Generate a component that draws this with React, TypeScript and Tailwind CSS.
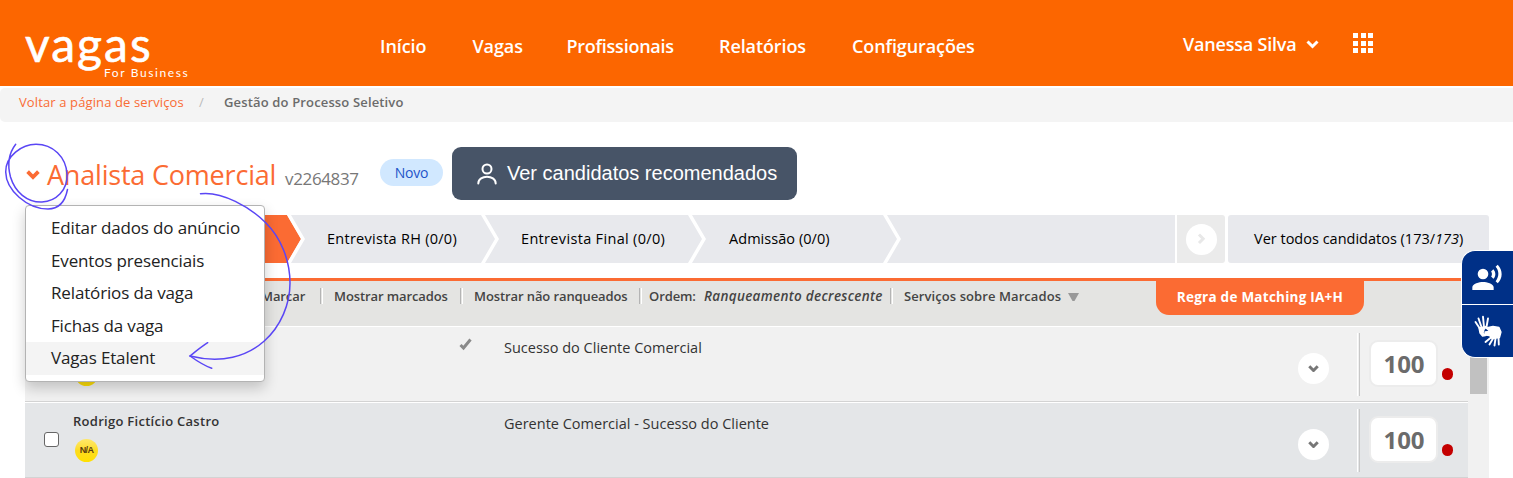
import { MdRecordVoiceOver } from "react-icons/md";
import type { ReactNode } from "react";

const menuItems = [
  "Editar dados do anúncio",
  "Eventos presenciais",
  "Relatórios da vaga",
  "Fichas da vaga",
  "Vagas Etalent",
];

const navItems = [
  { label: "Início", cls: "w-[92.5px]" },
  { label: "Vagas", cls: "w-[94px]" },
  { label: "Profissionais", cls: "w-[152.5px] tracking-[-0.25px]" },
  { label: "Relatórios", cls: "w-[133px]" },
  { label: "Configurações", cls: "w-[130px]" },
];

const rows = [
  { id: 1, name: "", job: "Sucesso do Cliente Comercial", checked: true, bg: "bg-[#f1f1f1]" },
  { id: 2, name: "Rodrigo Fictício Castro", job: "Gerente Comercial - Sucesso do Cliente", checked: false, bg: "bg-[#e4e6e8]" },
];

function Chevron({ className, size = 13, width = 3 }: { className?: string; size?: number; width?: number }) {
  return (
    <svg className={className} width={size} height={(size * 9) / 13} viewBox="0 0 13 9" fill="none">
      <path d="M1.5 1.5 6.5 6.5 11.5 1.5" stroke="currentColor" strokeWidth={width} />
    </svg>
  );
}

function Stage({ className, children }: { className: string; children?: ReactNode }) {
  return (
    <div className={`relative flex h-12 shrink-0 items-center bg-[#e8e9ed] text-[14.5px] text-black ${className}`}>
      {children}
    </div>
  );
}

function StageArrow() {
  return (
    <svg className="absolute top-0 -right-[18px] z-10" width="18" height="48" viewBox="0 0 18 48">
      <path d="M0 0 L14 24 L0 48 H4 L18 24 L4 0Z" fill="#fff" />
    </svg>
  );
}

function Divider() {
  return <span className="mt-[7px] h-4 w-[3px] shrink-0 border-r border-l border-r-white border-l-[#b4b4b4]" />;
}

function Header() {
  return (
    <header className="flex h-[86px] bg-[#fc6600] text-white">
      <div className="w-[380px] shrink-0 pt-[33px] pl-[25px] font-[Lato] whitespace-nowrap">
        <div className="h-[31px] text-[48px] leading-[21px] tracking-[2px] [-webkit-text-stroke:0.6px_white]">vagas</div>
        <div className="pl-[79px] text-[12px] leading-[17px] tracking-[1.6px]">For Business</div>
      </div>
      <nav className="flex w-[803px] shrink-0 pt-[33px] text-[18px] leading-[26px] font-semibold tracking-[-0.1px]">
        {navItems.map((n) => (
          <a key={n.label} className={`shrink-0 whitespace-nowrap ${n.cls}`}>
            {n.label}
          </a>
        ))}
      </nav>
      <div className="w-[123px] pt-[31px] text-[18px] leading-[26px] font-semibold tracking-[-0.2px] whitespace-nowrap">
        Vanessa Silva
      </div>
      <Chevron className="mt-10" />
      <div className="mt-[33px] ml-[34px] grid h-5 grid-cols-3 gap-[2.5px]">
        {Array.from({ length: 9 }, (_, i) => (
          <span key={i} className="size-[5px] bg-white" />
        ))}
      </div>
    </header>
  );
}

function ActionsMenu() {
  return (
    <div className="absolute top-[205px] left-[25px] z-20 h-[177px] w-60 rounded-[4px] border border-[#b3b3b3] bg-white pt-[6px] shadow-[0_6px_14px_rgba(0,0,0,0.2)]">
      {menuItems.map((item, i) => (
        <div
          key={item}
          className={`h-[32.5px] pl-[25px] text-[17px] leading-[31px] tracking-[-0.15px] text-[#222] ${i === menuItems.length - 1 ? "bg-[#f4f4f4]" : ""}`}
        >
          {item}
        </div>
      ))}
    </div>
  );
}

function Annotations() {
  return (
    <svg className="pointer-events-none absolute top-0 left-0 z-30" width="320" height="400" fill="none" stroke="#5a46f5" strokeWidth="1.5" strokeLinecap="round">
      <path d="M15.7 144.3C9 153 7 164 10.5 177C15 192 27 202.5 42 202C56 201.5 68 190 67 174C66 157 53 144.3 36 144.3C22 144.3 5.5 156 5.7 172C6 190 27 209 48 209C59 209 65 202 67.5 189.5" />
      <path d="M200.5 193.7C222 191 250 207 266 223C280 237 290 259 290 283C290 325 254 372 190 356" />
      <path d="M207.7 342.7C201 347 195 352 190 356C197 361 204 365.5 211.7 368.3" />
    </svg>
  );
}

function AccessibilityBar() {
  return (
    <div className="absolute top-[250px] right-0 z-20 w-[52px] overflow-hidden rounded-l-[14px] border-y border-l border-white bg-[#003087] text-white">
      <div className="h-[54px] border-b border-white pt-[11px] pl-[9px]">
        <MdRecordVoiceOver size={32} />
      </div>
      <div className="h-[52px] pt-[10px] pl-[12px]">
        <svg width="30" height="32" viewBox="0 0 30 32" fill="none" stroke="#fff" strokeLinecap="round" strokeLinejoin="round">
          <path d="M5.5 13 1.5 7M7.5 12 4.5 3.5M10 12 9 1.8M12.5 12 14 3.5" strokeWidth="1.9" />
          <path d="M5 13 12.5 11.5 10 14.5 9 18 11.5 20.5 8.5 21 6 18Z" fill="#fff" strokeWidth="1.3" />
          <path d="M17 22.5 11.5 27M19 23.5 15.5 29.5M21.5 23.5 20.5 30.5M24.5 22 24.8 29.5" strokeWidth="1.9" />
          <path d="M11 17 16 16.500 12 13 19 11.5 25 12.5 27 17 25.5 22.5 18 23.5 15.500 20.500 11 20Z" fill="#fff" strokeWidth="1.3" />
        </svg>
      </div>
    </div>
  );
}

export default function App() {
  return (
    <div className="relative h-[478px] w-[1513px] overflow-hidden bg-white font-['Open_Sans',sans-serif]">
      <Header />

      <div className="mt-[2px] flex h-[34px] rounded-l-[5px] bg-[#f4f4f4] pl-[19px] text-[13px] leading-[29px] whitespace-nowrap">
        <span className="w-[180px] tracking-[0.12px] text-[#f96c35]">Voltar a página de serviços</span>
        <span className="w-[25px] text-[#bbb]">/</span>
        <span className="font-semibold tracking-[0.15px] text-[#6b6b6b]">Gestão do Processo Seletivo</span>
      </div>

      <div className="flex h-[93px] pl-[26px] whitespace-nowrap">
        <Chevron className="mt-[48px] text-[#fb6b33]" size={14} width={3.5} />
        <h1 className="ml-[7px] w-[238px] pt-[34px] text-[27px] leading-[38px] tracking-[-0.2px] text-[#fb6b33]">
          Analista Comercial
        </h1>
        <span className="w-[95px] pt-[46px] text-[17px] leading-[22px] tracking-[-0.35px] text-[#777]">v2264837</span>
        <span className="mt-[37px] h-[27px] w-[63px] rounded-full bg-[#d1e8ff] text-center text-[14px] leading-[27px] tracking-[-0.2px] text-[#1d55c9]">
          Novo
        </span>
        <button className="mt-[25px] ml-[9px] flex h-[53px] w-[345px] items-center rounded-[9px] bg-[#475467] pl-[25px] font-['Liberation_Sans'] text-[20px] text-white">
          <svg width="20" height="22" viewBox="0 0 20 22" fill="none" stroke="#fff" strokeWidth="2" strokeLinecap="round">
            <circle cx="10" cy="6" r="4.5" />
            <path d="M1.3 20.5C1.5 11.5 18.5 11.5 18.7 20.5" />
          </svg>
          <span className="-mt-[2px] ml-[10px]">Ver candidatos recomendados</span>
        </button>
      </div>

      <div className="flex pl-[25px] whitespace-nowrap">
        <Stage className="w-[262px] bg-[#fb6b33]!">
          <svg className="absolute top-0 -right-[18px] z-10" width="18" height="48" viewBox="0 0 18 48">
            <path d="M0 0 14 24 0 48Z" fill="#fb6b33" />
            <path d="M0 0 L14 24 L0 48 H4 L18 24 L4 0Z" fill="#fff" />
          </svg>
        </Stage>
        <Stage className="w-[194px] pl-[40px] tracking-[0.27px]">
          Entrevista RH (0/0)
          <StageArrow />
        </Stage>
        <Stage className="w-[207px] pl-[40px] tracking-[0.33px]">
          Entrevista Final (0/0)
          <StageArrow />
        </Stage>
        <Stage className="w-[195px] pl-[41px] tracking-[0.05px]">
          Admissão (0/0)
          <StageArrow />
        </Stage>
        <Stage className="w-[292px]" />
        <div className="ml-[2px] flex h-12 w-12 items-center justify-center rounded-r-[3px] bg-[#ebebeb]">
          <span className="flex size-[31px] items-center justify-center rounded-full bg-white text-[#e8e8e8]">
            <Chevron className="-rotate-90" size={11} width={3.5} />
          </span>
        </div>
        <Stage className="ml-[3px] w-[261px] rounded-[3px] pl-[26px]">
          Ver todos candidatos (173/<i>173</i>)
        </Stage>
      </div>

      <div className="mt-[15px] ml-[25px] w-[1464px]">
        <div className="flex h-[48px] w-full border-t-[3px] border-[#fb6b33] bg-[#e4e4e2] text-[13px] leading-[31px] font-semibold tracking-[-0.1px] whitespace-nowrap text-[#444]">
          <span className="w-[295px] pl-[236px]">Marcar</span>
          <Divider />
          <span className="w-[137px] pl-[11px]">Mostrar marcados</span>
          <Divider />
          <span className="w-[176px] pl-[11px]">Mostrar não ranqueados</span>
          <Divider />
          <span className="w-[62px] pl-[7px]">Ordem:</span>
          <i className="w-[186px] text-[13.5px] tracking-[0.3px]">Ranqueamento decrescente</i>
          <Divider />
          <span className="w-[175px] pl-[11px] tracking-[0.08px]">Serviços sobre Marcados</span>
          <svg className="mt-[12px]" width="11" height="8">
            <path d="M0 0H11L6.5 8H4.5Z" fill="#999" />
          </svg>
          <span className="ml-[77px] h-[34px] w-[208px] rounded-b-[13px] bg-[#fb6b33] text-center text-[13.5px] leading-[32px] font-bold tracking-[0.25px] text-white">
            Regra de Matching IA+H
          </span>
        </div>

        <div className="flex">
          <div className="w-[1443px]">
            {rows.map((row) => (
              <div key={row.id} className={`flex h-[76px] border-t border-b border-t-white border-b-[#d3d3d3] ${row.bg}`}>
                <input type="checkbox" className="mt-[29px] ml-[19px] size-[15px] shrink-0 appearance-none rounded-[3px] border border-[#666] bg-white" />
                <div className="ml-[14px] w-[360px] pt-[8px]">
                  <div className="h-5 text-[13px] leading-[20px] font-semibold tracking-[0.28px] text-[#333]">{row.name}</div>
                  <div className="mt-[8px] ml-[2px] flex size-[23px] items-center justify-center rounded-full bg-linear-to-b from-[#ffe868] via-[#fddc1c] to-[#ffe000] font-['Liberation_Sans'] text-[9px] font-bold tracking-[-0.6px] text-[#5a3c10]">
                    {row.name && "N/A"}
                  </div>
                </div>
                <div className="w-[71px] shrink-0 pt-[10px]">
                  {row.checked && (
                    <svg className="ml-[26px]" width="13" height="14" viewBox="0 0 13 14" fill="none">
                      <path d="M1.5 8 4.5 11 11.5 2.5" stroke="#8a8a8a" strokeWidth="3" />
                    </svg>
                  )}
                </div>
                <div className="w-[794px] shrink-0 pt-[10px] text-[14.5px] leading-[22px] text-[#333]">{row.job}</div>
                <div className="mt-[26px] flex size-[31px] shrink-0 items-center justify-center rounded-full bg-white text-[#777]">
                  <Chevron size={11} width={3.5} />
                </div>
                <span className="mt-[6px] ml-[28px] h-[63px] w-[3px] shrink-0 border-r border-l border-r-[#c8c8c8] border-l-white" />
                <div className="mt-[13px] ml-[9px] h-[47px] w-[69px] shrink-0 rounded-[9px] border-2 border-[#ececec] bg-white pl-px text-center text-[24px] leading-[43px] font-bold text-[#6b6b6b]">
                  100
                </div>
                <span className="mt-[41px] ml-[4px] h-3 w-[11px] shrink-0 rounded-full bg-[#c40000]" />
              </div>
            ))}
          </div>
          <div className="flex h-[152px] w-[21px] justify-center bg-[#f1f1f1]">
            <span className="h-[68px] w-[17px] bg-[#c1c1c1]" />
          </div>
        </div>
      </div>

      <ActionsMenu />
      <Annotations />
      <AccessibilityBar />
    </div>
  );
}
